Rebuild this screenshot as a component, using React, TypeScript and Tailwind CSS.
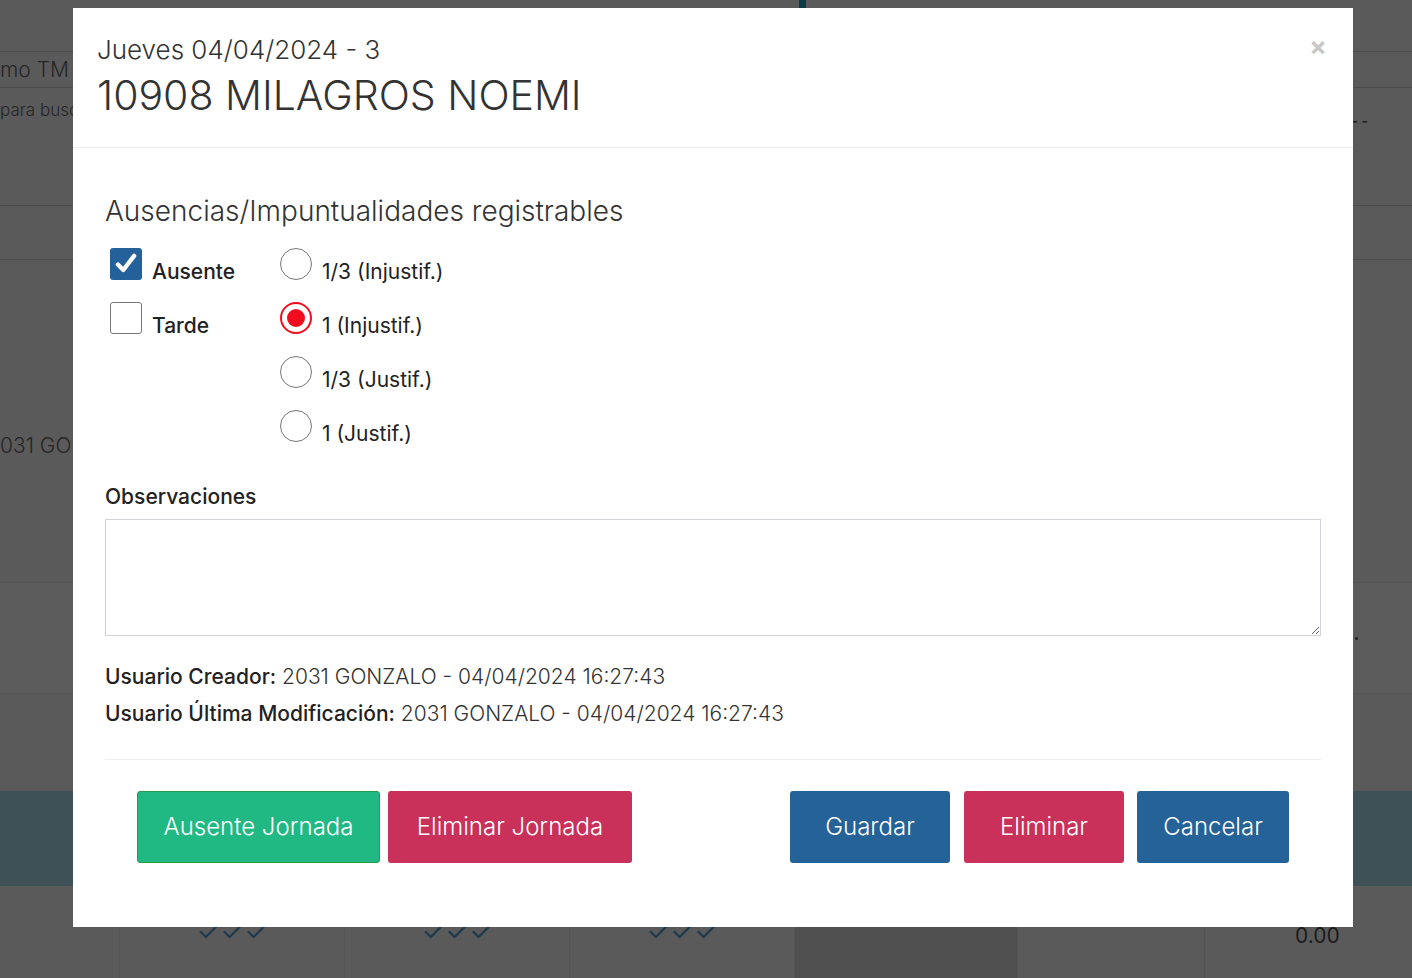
import React from "react";

const font = { fontFamily: "Inter, 'Open Sans', sans-serif" };

function Checkbox({ checked }: { checked?: boolean }) {
  if (checked) {
    return (
      <span className="flex h-8 w-8 shrink-0 items-center justify-center rounded-[3px] bg-[#24609a]">
        <svg viewBox="0 0 24 24" className="h-[26px] w-[26px]" fill="none" stroke="#fff" strokeWidth="4" strokeLinecap="round" strokeLinejoin="round">
          <path d="M4.5 12.5l5 5L19.5 4.5" />
        </svg>
      </span>
    );
  }
  return <span className="block h-8 w-8 shrink-0 rounded-[3px] border-[1.5px] border-[#777] bg-white" />;
}

function Radio({ checked }: { checked?: boolean }) {
  if (checked) {
    return (
      <span className="flex h-8 w-8 shrink-0 items-center justify-center rounded-full border-2 border-[#f10d1d] bg-white">
        <span className="block h-[18px] w-[18px] rounded-full bg-[#f10d1d]" />
      </span>
    );
  }
  return <span className="block h-8 w-8 shrink-0 rounded-full border-[1.5px] border-[#777] bg-white" />;
}

function Backdrop() {
  return (
    <div className="flex h-[978px] w-[1412px] flex-col bg-[#5a5a5a] text-[#262626]" style={font}>
      {/* page behind the dialog */}
      <div className="relative h-[52px] border-b border-[#4c4c4c]">
        <div className="absolute left-[799px] top-0 h-2 w-[7px] bg-[#0e3a48]" />
      </div>
      <div className="flex h-9 items-center border-b border-[#4c4c4c]">
        <div className="whitespace-nowrap text-[21px] font-light">mo TM</div>
      </div>
      <div className="flex h-[118px] items-start justify-between border-b border-[#4c4c4c] pt-[10px]">
        <div className="whitespace-nowrap text-[17px] font-light">para busc</div>
        <div className="mr-[44px] mt-[16px] text-[14px] font-bold leading-none text-[#222]">- -</div>
      </div>
      <div className="h-[54px] border-b border-[#4c4c4c]" />
      <div className="h-[322px] pt-[172px]">
        <div className="whitespace-nowrap text-[21px] font-light leading-[28px]">031 GO</div>
      </div>
      <div className="flex h-[112px] items-center justify-end border-y border-[#555] bg-[#5c5c5c] pr-[54px]">
        <span className="h-[3px] w-[3px] rounded-full bg-[#222]" />
      </div>
      <div className="h-[97px]" />
      <div className="h-[95px] bg-[#3e5157]" />
      <div className="grid flex-1 grid-cols-[120px_225px_225px_225px_223px_187px_207px]">
        <div className="border-r border-[#545454]" />
        {[0, 1, 2].map((i) => (
          <div key={i} className="flex items-start justify-center border-r border-[#545454] pt-[32px] text-[27px] leading-none text-[#1f3a4d]">
            ✓✓✓
          </div>
        ))}
        <div className="border-r border-[#545454] bg-[#505050]" />
        <div className="border-r border-[#545454]" />
        <div className="flex items-start justify-start pl-[90px] pt-[39px] text-[21px] leading-none text-[#1c1c1c]">0.00</div>
      </div>
    </div>
  );
}

export default function App() {
  return (
    <div className="relative h-[978px] w-[1412px] overflow-hidden" style={font}>
      <Backdrop />

      <div className="absolute left-[73px] top-[8px] w-[1280px] bg-white text-[#333]">
        {/* Header */}
        <div className="relative h-[140px] border-b border-[#eeeeee] px-6 pt-[25px]">
          <div className="text-[26px] font-light leading-[34px] text-[#333]">Jueves 04/04/2024 - 3</div>
          <div className="mt-[5px] text-[41px] font-light leading-[46px] text-[#333]">10908 MILAGROS NOEMI</div>
          <button className="absolute right-[26px] top-[26px] text-[26px] font-bold leading-none text-[#c8c8c8]">×</button>
        </div>

        {/* Body */}
        <div className="px-8 pt-[46px]">
          <div className="text-[28px] font-light leading-[34px] text-[#333]">Ausencias/Impuntualidades registrables</div>

          <div className="mt-[20px] flex">
            <div className="flex w-[175px] flex-col gap-[22px] pl-[5px]">
              <label className="flex h-8 items-start gap-[10px]">
                <Checkbox checked />
                <span className="mt-[10px] whitespace-nowrap text-[21px] font-medium leading-[28px] text-[#222]">Ausente</span>
              </label>
              <label className="flex h-8 items-start gap-[10px]">
                <Checkbox />
                <span className="mt-[10px] whitespace-nowrap text-[21px] font-medium leading-[28px] text-[#222]">Tarde</span>
              </label>
            </div>
            <div className="flex flex-col gap-[22px]">
              {[
                ["1/3 (Injustif.)", false],
                ["1 (Injustif.)", true],
                ["1/3 (Justif.)", false],
                ["1 (Justif.)", false],
              ].map(([label, on]) => (
                <label key={label as string} className="flex h-8 items-start gap-[10px]">
                  <Radio checked={on as boolean} />
                  <span className="mt-[10px] whitespace-nowrap text-[21px] leading-[28px] text-[#222]">{label}</span>
                </label>
              ))}
            </div>
          </div>

          <div className="mt-[41px] text-[21px] font-medium leading-[28px] text-[#222]">Observaciones</div>
          <textarea className="mt-[8px] block h-[117px] w-full resize-y border border-[#d2d2da] outline-none" />

          <div className="mt-[22px] text-[21px] leading-[37px] text-[#333]">
            <div>
              <span className="font-medium text-[#222]">Usuario Creador:</span>{" "}
              <span className="font-light">2031 GONZALO - 04/04/2024 16:27:43</span>
            </div>
            <div>
              <span className="font-medium text-[#222]">Usuario Última Modificación:</span>{" "}
              <span className="font-light">2031 GONZALO - 04/04/2024 16:27:43</span>
            </div>
          </div>

          <div className="mt-[27px] border-t border-[#eeeeee]" />

          <div className="flex items-center px-8 pb-[64px] pt-[31px] text-[24px] font-light text-white">
            <button className="h-[72px] w-[243px] rounded-[3px] border border-[#2a9a4c] bg-[#20b883]">Ausente Jornada</button>
            <button className="ml-2 h-[72px] w-[244px] rounded-[3px] bg-[#c9305a]">Eliminar Jornada</button>
            <div className="flex-1" />
            <button className="h-[72px] w-[160px] rounded-[3px] bg-[#256298]">Guardar</button>
            <button className="ml-[14px] h-[72px] w-[160px] rounded-[3px] bg-[#c9305a]">Eliminar</button>
            <button className="ml-[13px] h-[72px] w-[152px] rounded-[3px] bg-[#256298]">Cancelar</button>
          </div>
        </div>
      </div>
    </div>
  );
}
